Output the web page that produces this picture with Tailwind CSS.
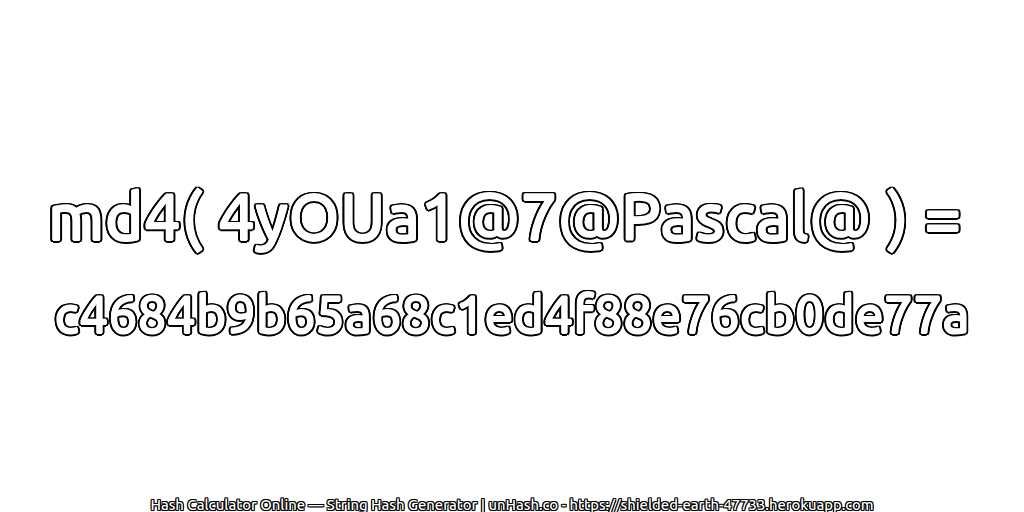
<!DOCTYPE html>
<html><head><script src="https://cdn.jsdelivr.net/npm/@tailwindcss/browser@4"></script></head>
<body class="bg-white">
<div class="w-[1024px] h-[512px] flex flex-col items-center overflow-hidden font-['Ubuntu','Noto_Sans','DejaVu_Sans',sans-serif] text-white font-medium">
<div class="flex-1 flex flex-col items-center gap-[31px] pt-[177px]">
<div class="text-[66px] leading-[76px] mr-[15px] whitespace-nowrap [text-shadow:0.6px_0_0_#fff,-0.6px_0_0_#fff,0_0.6px_0_#fff,0_-0.6px_0_#fff,2.5px_0_0_#000,-2.5px_0_0_#000,0_2.5px_0_#000,0_-2.5px_0_#000,1.8px_1.8px_0_#000,-1.8px_1.8px_0_#000,1.8px_-1.8px_0_#000,-1.8px_-1.8px_0_#000,2.3px_1px_0_#000,-2.3px_1px_0_#000,2.3px_-1px_0_#000,-2.3px_-1px_0_#000,1px_2.3px_0_#000,-1px_2.3px_0_#000,1px_-2.3px_0_#000,-1px_-2.3px_0_#000]">md4( 4yOUa1@7@Pascal@ ) =</div>
<div class="text-[51.8px] leading-[60px] whitespace-nowrap [text-shadow:0.6px_0_0_#fff,-0.6px_0_0_#fff,0_0.6px_0_#fff,0_-0.6px_0_#fff,2.5px_0_0_#000,-2.5px_0_0_#000,0_2.5px_0_#000,0_-2.5px_0_#000,1.8px_1.8px_0_#000,-1.8px_1.8px_0_#000,1.8px_-1.8px_0_#000,-1.8px_-1.8px_0_#000,2.3px_1px_0_#000,-2.3px_1px_0_#000,2.3px_-1px_0_#000,-2.3px_-1px_0_#000,1px_2.3px_0_#000,-1px_2.3px_0_#000,1px_-2.3px_0_#000,-1px_-2.3px_0_#000]">c4684b9b65a68c1ed4f88e76cb0de77a</div>
</div>
<div class="text-[14.8px] leading-4 h-[16px] mb-[-1px] whitespace-nowrap [text-shadow:1px_0_0_#000,-1px_0_0_#000,0_1px_0_#000,0_-1px_0_#000,1px_1px_0_#000,-1px_1px_0_#000,1px_-1px_0_#000,-1px_-1px_0_#000]">Hash Calculator Online — String Hash Generator | unHash.co - https://shielded-earth-47733.herokuapp.com</div>
</div>
</body></html>
